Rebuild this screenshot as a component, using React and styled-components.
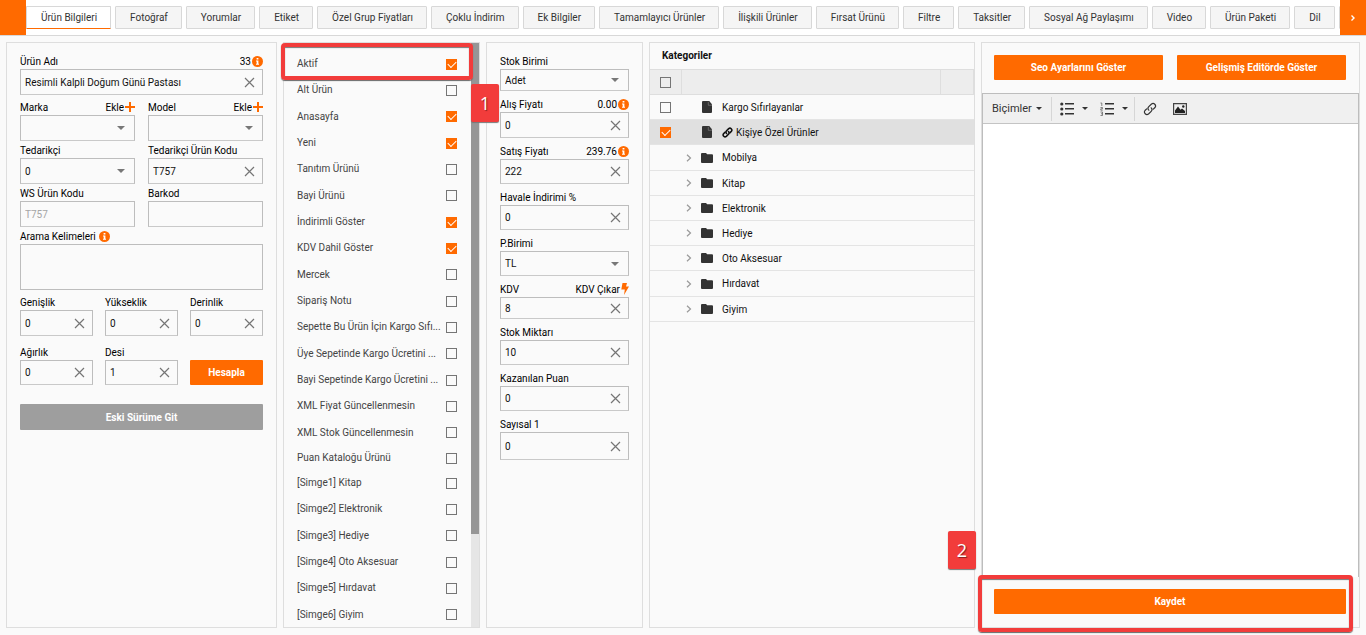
import React, { useState } from "react";
import styled, { createGlobalStyle, css } from "styled-components";

const ORANGE = "#ff6a00";
const RED = "#f23c3b";
const LINE = "#dedede";

const GlobalStyle = createGlobalStyle`
    * {
        box-sizing: border-box;
    }

    body {
        margin: 0;
        background-color: #fafafa;
        color: #212121;
        font-family: Roboto, "Liberation Sans", sans-serif;
        font-size: 10px;
    }

    button, input, select, textarea {
        font-family: inherit;
        font-size: inherit;
        color: inherit;
    }

    svg {
        flex: none;
    }
`;

const Page = styled.div`
    display: flex;
    flex-direction: column;
    height: 100vh;
`;

const Header = styled.header`
    display: flex;
    flex: none;
    height: 36px;
    background-color: #fff;
    border-bottom: 1px solid #d8d8d8;
`;

const ScrollButton = styled.button`
    flex: none;
    display: flex;
    align-items: center;
    justify-content: center;
    width: 26px;
    padding: 0;
    border: 0;
    background-color: ${ORANGE};
    color: #fff;
`;

const Tabs = styled.nav`
    flex: 1;
    min-width: 0;
    display: flex;
    gap: 4px;
    padding-top: 6px;
    overflow: hidden;
`;

const Tab = styled.button`
    flex: none;
    height: 23px;
    padding: 0 13px 0 14px;
    border: 1px solid #d8d8d8;
    border-radius: 1px;
    background-color: #f5f5f5;
    color: #333;
    white-space: nowrap;

    ${(props) =>
        props.$active &&
        css`
            background-color: #fff;
            border-bottom-color: ${ORANGE};
        `}
`;

const Main = styled.main`
    flex: 1;
    min-height: 0;
    display: grid;
    grid-template-columns: 271fr 197fr 157fr 326fr 379fr;
    gap: 6px;
    padding: 6px 6px 7px;
`;

const Panel = styled.section`
    position: relative;
    display: flex;
    flex-direction: column;
    min-width: 0;
    min-height: 0;
    border: 1px solid ${LINE};
`;

const FormPanel = styled(Panel)`
    padding: 10px 13px;
`;

const Row = styled.div`
    display: grid;
    grid-template-columns: repeat(${(props) => props.$cols || 1}, minmax(0, 1fr));
    align-items: end;
    gap: ${(props) => (props.$cols === 2 ? 13 : 12)}px;
    margin-top: ${(props) => props.$top || 0}px;
`;

const FieldTop = styled.div`
    display: flex;
    align-items: center;
    justify-content: space-between;
    height: 16px;
    color: #000;
    white-space: nowrap;
`;

const Extra = styled.span`
    display: flex;
    align-items: center;
    gap: 1px;
`;

const PlainButton = styled.button`
    display: flex;
    align-items: center;
    gap: 1px;
    padding: 0;
    border: 0;
    background: none;
`;

const Box = styled.div`
    display: flex;
    align-items: center;
    height: ${(props) => props.$height || 26}px;
    padding-right: 7px;
    border: 1px solid #bdbdbd;
    border-bottom-color: #c9c9c9;
    color: #111;
`;

const Input = styled.input`
    flex: 1;
    min-width: 0;
    height: 100%;
    padding: 0 0 0 4px;
    border: 0;
    outline: 0;
    background: none;

    &:disabled {
        color: #a5a5a5;
    }
`;

const Select = styled.select`
    flex: 1;
    min-width: 0;
    height: 100%;
    padding: 0 0 0 4px;
    border: 0;
    outline: 0;
    background: none;
    appearance: none;
`;

const TextArea = styled.textarea`
    display: block;
    width: 100%;
    height: 46px;
    padding: 4px;
    border: 1px solid #bdbdbd;
    background: none;
    resize: none;
`;

const Arrow = styled.span`
    flex: none;
    margin-right: ${(props) => props.$gap || 0}px;
    border: ${(props) => props.$size || 3}px solid transparent;
    border-top-color: ${(props) => props.$color || "#777"};
    border-bottom: 0;
`;

const Action = styled.button`
    flex: 1;
    width: 100%;
    height: ${(props) => props.$height || 25}px;
    margin-top: ${(props) => props.$top || 0}px;
    padding: 0;
    border: 0;
    border-radius: 1px;
    background-color: ${(props) => (props.$grey ? "#9e9e9e" : ORANGE)};
    color: #fff;
    font-weight: 700;

    ${FormPanel} & {
        flex: none;
    }
`;

const Check = styled.input.attrs({ type: "checkbox" })`
    flex: none;
    display: grid;
    place-content: center;
    appearance: none;
    width: 11px;
    height: 11px;
    margin: 0;
    border: 1px solid #757575;

    &:checked {
        border-color: ${ORANGE};
        background-color: ${ORANGE};
    }

    &:checked::after {
        content: "";
        width: 7px;
        height: 4px;
        margin-bottom: 2px;
        border: solid #fff;
        border-width: 0 0 1px 1px;
        transform: rotate(-45deg);
    }
`;

const ListBody = styled.div`
    flex: 1;
    min-height: 0;
    display: flex;
`;

const Lists = styled.div`
    flex: 1;
    min-width: 0;
    padding-top: 8px;
    overflow: hidden;
`;

const List = styled.ul`
    margin: 0;
    padding: 0 14px 0 13px;
    list-style: none;
`;

const ListItem = styled.li`
    height: 26px;

    &:nth-child(3n) {
        height: 27px;
    }

    &:nth-child(16) {
        height: 24px;
    }
`;

const ListLabel = styled.label`
    display: flex;
    align-items: center;
    justify-content: space-between;
    height: 100%;
    color: #444;
    line-height: 16px;
    white-space: nowrap;
`;

const Track = styled.div`
    flex: none;
    width: 8px;
    background-color: #e6e6e6;
`;

const Thumb = styled.div`
    height: 84%;
    background-color: #969696;
`;

const Title = styled.h2`
    margin: 0;
    padding: 0 12px;
    color: #111;
    font-size: 10px;
    line-height: 26px;
`;

const Tree = styled.table`
    width: 100%;
    table-layout: fixed;
    border-collapse: separate;
    border-spacing: 0;
`;

const HeadCell = styled.th`
    width: ${(props) => props.$width || "auto"};
    height: 26px;
    padding: 0 0 0 10px;
    border: solid ${LINE};
    border-width: 1px 1px 1px 0;
    background-color: #ededed;
`;

const TreeRow = styled.tr`
    height: 25px;
    background-color: ${(props) => (props.$active ? "#e0e0e0" : "transparent")};

    &:nth-child(3),
    &:nth-child(8) {
        height: 26px;
    }
`;

const TreeCell = styled.td`
    padding: 0 0 0 ${(props) => props.$left || 0}px;
    border-bottom: 1px solid #e4e4e4;
    color: #111;
`;

const Node = styled.div`
    display: flex;
    align-items: center;
    gap: 7px;
`;

const Chevron = styled.span`
    display: flex;
    width: 8px;
`;

const NodeName = styled.span`
    display: flex;
    align-items: center;
    gap: 3px;
    margin-left: 2px;
`;

const Buttons = styled.div`
    display: flex;
    gap: 14px;
    padding: 12px 13px 13px 12px;
`;

const Editor = styled.div`
    flex: 1;
    min-height: 0;
    display: flex;
    flex-direction: column;
    border: 1px solid #bdbdbd;
    border-bottom: 0;
`;

const Toolbar = styled.div`
    flex: none;
    display: flex;
    align-items: center;
    height: 30px;
    padding: 3px 9px;
    border-bottom: 1px solid #c4c4c4;
    background-color: #f0f0f0;
    color: #333;
`;

const ToolGroup = styled.div`
    display: flex;
    align-items: center;
    gap: ${(props) => props.$gap}px;
    height: 24px;

    & + & {
        padding-left: 8px;
        border-left: 1px solid #d6d6d6;
    }
`;

const ToolButton = styled.button`
    display: flex;
    align-items: center;
    gap: ${(props) => props.$gap || 0}px;
    padding: 0;
    border: 0;
    background: none;
    font-size: 11px;
`;

const Canvas = styled.textarea`
    flex: 1;
    width: 100%;
    border: 0;
    outline: 0;
    background-color: #fff;
    resize: none;
`;

const Outline = styled.div`
    position: absolute;
    inset: ${(props) => props.$inset};
    height: ${(props) => props.$height}px;
    border: 4px solid ${RED};
    border-radius: 4px;
    box-shadow: 0 1px 1px #666, inset 0 1px 1px #777;
    pointer-events: none;
    z-index: 1;
`;

const Step = styled.span`
    position: absolute;
    z-index: 2;
    inset: ${(props) => props.$inset};
    display: flex;
    align-items: center;
    justify-content: center;
    width: 28px;
    height: 38px;
    border-radius: 2px;
    box-shadow: 0 1px 1px #777;
    background-color: ${RED};
    color: #fff;
    font-family: "Open Sans", "Noto Sans", sans-serif;
    font-size: 18px;
    font-weight: 400;
    text-shadow: 1px 1px 1px #802020;
`;

const CloseIcon = () => (
    <svg width="11" height="11" viewBox="0 0 11 11" fill="none" stroke="#757575" strokeWidth="1.2">
        <path d="M1 1l9 9M10 1l-9 9" />
    </svg>
);

const InfoIcon = () => (
    <svg width="11" height="11" viewBox="0 0 11 11">
        <circle cx="5.5" cy="5.5" r="5.5" fill={ORANGE} />
        <path d="M4.6 2h1.8v1.5H4.6zM4 4.5h2.4v3.3H7v1H4v-1h.7V5.5H4z" fill="#fff" />
    </svg>
);

const PlusIcon = () => (
    <svg width="10" height="10" viewBox="0 0 10 10">
        <path d="M4 0h2v4h4v2H6v4H4V6H0V4h4z" fill={ORANGE} />
    </svg>
);

const BoltIcon = () => (
    <svg width="8" height="12" viewBox="0 0 8 12">
        <path d="M1.500 0h4.500L5 3.600h3L3 12l.8-5.500H.3z" fill={ORANGE} />
    </svg>
);

const FileIcon = () => (
    <svg width="12" height="12" viewBox="0 0 12 12">
        <path d="M2 0h5v4.500h4V11a1 1 0 0 1-1 1H2a1 1 0 0 1-1-1V1a1 1 0 0 1 1-1zM8 0l3 3.500H8z" fill="#333" />
        <path d="M7 0h1l3 3.500V5H7z" fill="#333" />
        <path d="M7.300.8v3.500H11" fill="none" stroke="#999" strokeWidth=".5" />
    </svg>
);

const FolderIcon = () => (
    <svg width="12" height="12" viewBox="0 0 12 12">
        <path d="M1 1h4l1.200 1.300H11a1 1 0 0 1 1 1V10a1 1 0 0 1-1 1H1a1 1 0 0 1-1-1V2a1 1 0 0 1 1-1z" fill="#333" />
    </svg>
);

const ChevronIcon = ({ color = "#999" }) => (
    <svg width="6" height="8" viewBox="0 0 6 8" fill="none" stroke={color} strokeWidth="1.200">
        <path d="M1 .7L4.500 4 1 7.300" />
    </svg>
);

const NextIcon = () => (
    <svg width="6" height="6" viewBox="0 0 6 6" fill="none" stroke="#fff" strokeWidth="1.400">
        <path d="M1.500.5L4 3 1.500 5.500" />
    </svg>
);

const LinkIcon = ({ size = 14, weight = 1.200, color = "#333" }) => (
    <svg width={size} height={size} viewBox="0 0 14 14" fill="none" stroke={color} strokeWidth={weight} strokeLinecap="round">
        <path d="M5.800 8.200a2.500 2.500 0 0 1 0-3.500l2.700-2.700a2.500 2.500 0 0 1 3.500 3.500L10.300 7.200" />
        <path d="M8.200 5.800a2.500 2.500 0 0 1 0 3.500l-2.700 2.700A2.500 2.500 0 0 1 2 8.500l1.700-1.700" />
    </svg>
);

const BulletIcon = () => (
    <svg width="14" height="14" viewBox="0 0 14 14" fill="#333">
        <circle cx="1.800" cy="2" r="1.600" />
        <circle cx="1.800" cy="7" r="1.600" />
        <circle cx="1.800" cy="12" r="1.600" />
        <path d="M5 1h9v1.500H5zM5 6h9v1.500H5zM5 11h9v1.500H5z" />
    </svg>
);

const NumberIcon = () => (
    <svg width="14" height="14" viewBox="0 0 14 14" fill="#333">
        <path d="M5 1h9v1.500H5zM5 6h9v1.500H5zM5 11h9v1.500H5z" />
        <path d="M.5 1h1.300v3M.5 5.500h2v1.300H.8v1.400h1.900M.5 10h2v3.500h-2M1 11.800h1.400" fill="none" stroke="#555" strokeWidth=".7" />
    </svg>
);

const ImageIcon = () => (
    <svg width="14" height="12" viewBox="0 0 14 12">
        <path d="M.6.6h12.800v10.800H.6z" fill="none" stroke="#444" strokeWidth="1.200" />
        <path d="M2 10V7.500L5 3.500l2.500 3.200L9 5.500l3 2.500v2z" fill="#222" />
        <circle cx="10.300" cy="3.500" r="1.200" fill="#222" />
    </svg>
);

const tabs = [
    "Ürün Bilgileri", "Fotoğraf", "Yorumlar", "Etiket", "Özel Grup Fiyatları", "Çoklu İndirim",
    "Ek Bilgiler", "Tamamlayıcı Ürünler", "İlişkili Ürünler", "Fırsat Ürünü", "Filtre", "Taksitler",
    "Sosyal Ağ Paylaşımı", "Video", "Ürün Paketi", "Dil", "",
];

const options = [
    ["Aktif", true],
    ["Alt Ürün", false],
    ["Anasayfa", true],
    ["Yeni", true],
    ["Tanıtım Ürünü", false],
    ["Bayi Ürünü", false],
    ["İndirimli Göster", true],
    ["KDV Dahil Göster", true],
    ["Mercek", false],
    ["Sipariş Notu", false],
    ["Sepette Bu Ürün İçin Kargo Sıfı...", false],
    ["Üye Sepetinde Kargo Ücretini ...", false],
    ["Bayi Sepetinde Kargo Ücretini ...", false],
    ["XML Fiyat Güncellenmesin", false],
    ["XML Stok Güncellenmesin", false],
    ["Puan Kataloğu Ürünü", false],
];

const symbols = ["Kitap", "Elektronik", "Hediye", "Oto Aksesuar", "Hırdavat", "Giyim"].map(
    (name, i) => [`[Simge${i + 1}] ${name}`, false]
);

const categories = [
    { name: "Kargo Sıfırlayanlar", file: true },
    { name: "Kişiye Özel Ürünler", file: true, linked: true },
    { name: "Mobilya" },
    { name: "Kitap" },
    { name: "Elektronik" },
    { name: "Hediye" },
    { name: "Oto Aksesuar" },
    { name: "Hırdavat" },
    { name: "Giyim" },
];

const Field = ({ id, label, value = "", extra, select, height, disabled, clear = true }) => (
    <div>
        <FieldTop>
            <label htmlFor={id}>{label}</label>
            {extra}
        </FieldTop>
        <Box $height={height}>
            {select ? (
                <>
                    <Select id={id} defaultValue={value}>
                        <option value={value}>{value}</option>
                    </Select>
                    <Arrow $gap={2} $size={4} />
                </>
            ) : (
                <>
                    <Input id={id} defaultValue={value} disabled={disabled} />
                    {clear && <CloseIcon />}
                </>
            )}
        </Box>
    </div>
);

const AddButton = () => (
    <PlainButton type="button">
        Ekle
        <PlusIcon />
    </PlainButton>
);

const Info = ({ children }) => (
    <Extra>
        {children}
        <InfoIcon />
    </Extra>
);

const CheckList = ({ items }) => (
    <List>
        {items.map(([name, checked]) => (
            <ListItem key={name}>
                <ListLabel>
                    {name}
                    <Check defaultChecked={checked} />
                </ListLabel>
            </ListItem>
        ))}
    </List>
);

const ProductForm = () => (
    <FormPanel>
        <Row>
            <Field id="name" label="Ürün Adı" value="Resimli Kalpli Doğum Günü Pastası" extra={<Info>33</Info>} />
        </Row>
        <Row $cols={2} $top={4}>
            <Field id="brand" label="Marka" select extra={<AddButton />} />
            <Field id="model" label="Model" select extra={<AddButton />} />
        </Row>
        <Row $cols={2} $top={1}>
            <Field id="supplier" label="Tedarikçi" value="0" select />
            <Field id="supplierCode" label="Tedarikçi Ürün Kodu" value="T757" />
        </Row>
        <Row $cols={2} $top={1}>
            <Field id="wsCode" label="WS Ürün Kodu" value="T757" disabled clear={false} />
            <Field id="barcode" label="Barkod" clear={false} />
        </Row>
        <Row $top={1}>
            <div>
                <FieldTop>
                    <Extra>
                        <label htmlFor="keywords">Arama Kelimeleri&nbsp;</label>
                        <InfoIcon />
                    </Extra>
                </FieldTop>
                <TextArea id="keywords" />
            </div>
        </Row>
        <Row $cols={3} $top={4}>
            <Field id="width" label="Genişlik" value="0" />
            <Field id="height" label="Yükseklik" value="0" />
            <Field id="depth" label="Derinlik" value="0" />
        </Row>
        <Row $cols={3} $top={8}>
            <Field id="weight" label="Ağırlık" value="0" height={25} />
            <Field id="desi" label="Desi" value="1" height={25} />
            <Action type="button">Hesapla</Action>
        </Row>
        <Action type="button" $grey $height={26} $top={19}>
            Eski Sürüme Git
        </Action>
    </FormPanel>
);

const StockForm = () => (
    <FormPanel>
        <Row>
            <Field id="unit" label="Stok Birimi" value="Adet" select height={22} />
        </Row>
        <Row $top={5}>
            <Field id="buyPrice" label="Alış Fiyatı" value="0" extra={<Info>0.00</Info>} />
        </Row>
        <Row $top={5}>
            <Field id="sellPrice" label="Satış Fiyatı" value="222" height={25} extra={<Info>239.76</Info>} />
        </Row>
        <Row $top={5}>
            <Field id="discount" label="Havale İndirimi %" value="0" height={25} />
        </Row>
        <Row $top={5}>
            <Field id="currency" label="P.Birimi" value="TL" select height={25} />
        </Row>
        <Row $top={5}>
            <Field
                id="vat"
                label="KDV"
                value="8"
                height={22}
                extra={
                    <PlainButton type="button">
                        KDV Çıkar
                        <BoltIcon />
                    </PlainButton>
                }
            />
        </Row>
        <Row $top={5}>
            <Field id="stock" label="Stok Miktarı" value="10" height={25} />
        </Row>
        <Row $top={5}>
            <Field id="points" label="Kazanılan Puan" value="0" height={25} />
        </Row>
        <Row $top={5}>
            <Field id="numeric" label="Sayısal 1" value="0" height={28} />
        </Row>
    </FormPanel>
);

const Categories = () => (
    <Panel>
        <Title>Kategoriler</Title>
        <Tree>
            <thead>
                <tr>
                    <HeadCell $width="32px">
                        <Check aria-label="Tümünü seç" />
                    </HeadCell>
                    <HeadCell />
                    <HeadCell $width="33px" />
                </tr>
            </thead>
            <tbody>
                {categories.map(({ name, file, linked }) => (
                    <TreeRow key={name} $active={linked}>
                        <TreeCell $left={10}>
                            {file && <Check aria-label={name} defaultChecked={linked} />}
                        </TreeCell>
                        <TreeCell $left={4} colSpan={2}>
                            <Node>
                                <Chevron>{!file && <ChevronIcon />}</Chevron>
                                {file ? <FileIcon /> : <FolderIcon />}
                                <NodeName>
                                    {linked && <LinkIcon size={11} weight={2} color="#111" />}
                                    {name}
                                </NodeName>
                            </Node>
                        </TreeCell>
                    </TreeRow>
                ))}
            </tbody>
        </Tree>
        <Step $inset="auto -2px 58px auto">2</Step>
    </Panel>
);

const EditorPanel = () => (
    <Panel>
        <Buttons>
            <Action type="button">Seo Ayarlarını Göster</Action>
            <Action type="button">Gelişmiş Editörde Göster</Action>
        </Buttons>
        <Editor>
            <Toolbar>
                <ToolGroup $gap={0}>
                    <ToolButton type="button" $gap={4}>
                        Biçimler
                        <Arrow $color="#333" $gap={9} />
                    </ToolButton>
                </ToolGroup>
                <ToolGroup $gap={12}>
                    <ToolButton type="button" $gap={8} aria-label="Liste">
                        <BulletIcon />
                        <Arrow $color="#333" />
                    </ToolButton>
                    <ToolButton type="button" $gap={8} aria-label="Numaralı liste">
                        <NumberIcon />
                        <Arrow $color="#333" $gap={6} />
                    </ToolButton>
                </ToolGroup>
                <ToolGroup $gap={16}>
                    <ToolButton type="button" aria-label="Bağlantı">
                        <LinkIcon />
                    </ToolButton>
                    <ToolButton type="button" aria-label="Resim">
                        <ImageIcon />
                    </ToolButton>
                </ToolGroup>
            </Toolbar>
            <Canvas aria-label="Açıklama" />
        </Editor>
        <Buttons>
            <Action type="button">Kaydet</Action>
        </Buttons>
        <Outline $inset="auto 6px -5px -4px" $height={57} />
    </Panel>
);

const App = () => {
    const [active, setActive] = useState(0);

    return (
        <Page>
            <GlobalStyle />
            <Header>
                <ScrollButton type="button" aria-label="Geri" />
                <Tabs>
                    {tabs.map((name, i) => (
                        <Tab key={i} type="button" $active={i === active} onClick={() => setActive(i)}>
                            {name}
                        </Tab>
                    ))}
                </Tabs>
                <ScrollButton type="button" aria-label="İleri">
                    <NextIcon />
                </ScrollButton>
            </Header>
            <Main>
                <ProductForm />
                <Panel>
                    <ListBody>
                        <Lists>
                            <CheckList items={options} />
                            <CheckList items={symbols} />
                        </Lists>
                        <Track>
                            <Thumb />
                        </Track>
                    </ListBody>
                    <Outline $inset="0 6px auto -3px" $height={37} />
                    <Step $inset="41px -20px auto auto">1</Step>
                </Panel>
                <StockForm />
                <Categories />
                <EditorPanel />
            </Main>
        </Page>
    );
};

export default App;
